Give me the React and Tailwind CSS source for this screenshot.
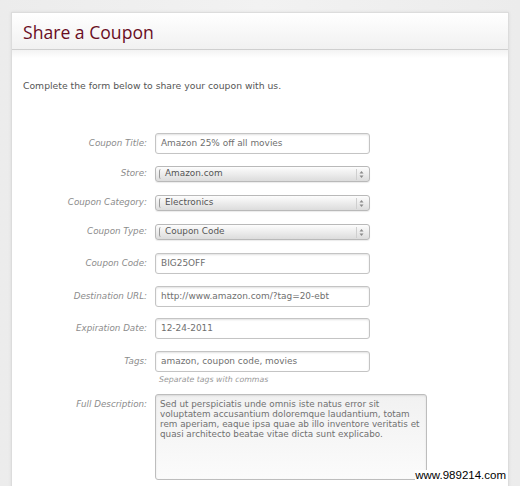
import React from 'react';

const font = { fontFamily: '"DejaVu Sans", Verdana, sans-serif' };

const fields = [
  { label: 'Coupon Title:', value: 'Amazon 25% off all movies', kind: 'input', mb: 'mb-[12px]' },
  { label: 'Store:', value: 'Amazon.com', kind: 'select', mb: 'mb-[13px]' },
  { label: 'Coupon Category:', value: 'Electronics', kind: 'select', mb: 'mb-[13px]' },
  { label: 'Coupon Type:', value: 'Coupon Code', kind: 'select', mb: 'mb-[13px]' },
  { label: 'Coupon Code:', value: 'BIG25OFF', kind: 'input', mb: 'mb-[12px]' },
  { label: 'Destination URL:', value: 'http://www.amazon.com/?tag=20-ebt', kind: 'input', mb: 'mb-[11px]' },
  { label: 'Expiration Date:', value: '12-24-2011', kind: 'input', mb: 'mb-[12px]' },
];

const descLines = [
  'Sed ut perspiciatis unde omnis iste natus error sit',
  'voluptatem accusantium doloremque laudantium, totam',
  'rem aperiam, eaque ipsa quae ab illo inventore veritatis et',
  'quasi architecto beatae vitae dicta sunt explicabo.',
];

// le petit sélecteur façon mac
const FakeSelect = ({ value }) => (
  <div className="relative flex h-[16px] w-[215px] items-center rounded-[3px] border border-[#b9b9b9] bg-gradient-to-b from-[#fdfdfd] to-[#dcdcdc] pl-[9px] text-[8.9px] text-[#555] shadow-[0_1px_1px_rgba(0,0,0,0.08)]">
    <span className="absolute left-[3px] top-[2px] h-[10px] w-[2px] rounded-l-[2px] border-l border-[#999]"></span>
    <span>{value}</span>
    <svg className="absolute right-[5px] top-[3px]" width="5" height="9" viewBox="0 0 5 9">
      <path d="M0.5 3.5 L2.5 1 L4.5 3.5 Z" fill="#8a8a8a" />
      <path d="M0.5 5.5 L2.5 8 L4.5 5.5 Z" fill="#8a8a8a" />
    </svg>
    <span className="absolute right-[12px] top-[2px] h-[11px] border-l border-[#cfcfcf]"></span>
  </div>
);

const TextBox = ({ value }) => (
  <div className="flex h-[21px] w-[215px] items-center rounded-[3px] border border-[#c4c4c4] bg-white pl-[5px] text-[8.95px] text-[#6f6f6f] shadow-[inset_0_1px_2px_rgba(0,0,0,0.12)]">
    {value}
  </div>
);

const Label = ({ children, className = '' }) => (
  <div className={`w-[135px] shrink-0 text-right text-[8.75px] italic text-[#8c8c8c] ${className}`}>{children}</div>
);

export default function App() {
  return (
    <div style={font} className="relative h-[486px] w-[520px] overflow-hidden bg-gradient-to-r from-[#ececec] via-[#f2f2f2] to-[#ececec] pl-[11px] pt-[12px]">
      <div className="h-[500px] w-[498px] border border-[#dcdcdc] bg-white shadow-[0_0_3px_rgba(0,0,0,0.08)]">
        {/* en-tête */}
        <div className="flex h-[37px] items-end border-b border-[#cfcfcf] bg-gradient-to-b from-[#ffffff] to-[#f1f1f1] pb-[7px] pl-[11px]">
          <h1 style={{ fontFamily: '"Open Sans", "DejaVu Sans", sans-serif' }} className="text-[17.6px] leading-none text-[#690d1f]">
            Share a Coupon
          </h1>
        </div>
        <div className="h-[8px] bg-gradient-to-b from-[#f3f3f3] to-white"></div>

        <p className="mt-[21px] pl-[11px] text-[9.25px] text-[#555]">Complete the form below to share your coupon with us.</p>

        <div className="mt-[40px]">
          {fields.map(f => (
            <div key={f.label} className={`flex items-center gap-[8px] ${f.mb}`}>
              <Label>{f.label}</Label>
              {f.kind === 'select' ? <FakeSelect value={f.value} /> : <TextBox value={f.value} />}
            </div>
          ))}

          <div className="flex items-center gap-[8px]">
            <Label>Tags:</Label>
            <TextBox value="amazon, coupon code, movies" />
          </div>
          <div className="mt-[2px] pl-[147px] text-[7.8px] italic text-[#999]">Separate tags with commas</div>

          <div className="mt-[8px] flex items-start gap-[8px]">
            <Label className="pt-[4px]">Full Description:</Label>
            <div className="h-[86px] w-[272px] rounded-[3px] border border-[#bdbdbd] bg-gradient-to-b from-[#f1f1f1] to-[#fbfbfb] pl-[4px] pt-[4px] text-[8.8px] leading-[10.3px] text-[#707070] shadow-[inset_0_1px_2px_rgba(0,0,0,0.1)]">
              {descLines.map(l => (
                <div key={l} className="whitespace-nowrap">{l}</div>
              ))}
            </div>
          </div>
        </div>
      </div>

      {/* filigrane */}
      <div style={{ fontFamily: '"Liberation Sans", Arial, sans-serif' }} className="absolute bottom-[5px] right-[14px] bg-white text-[11.5px] leading-none text-black">
        www.989214.com
      </div>
    </div>
  );
}
